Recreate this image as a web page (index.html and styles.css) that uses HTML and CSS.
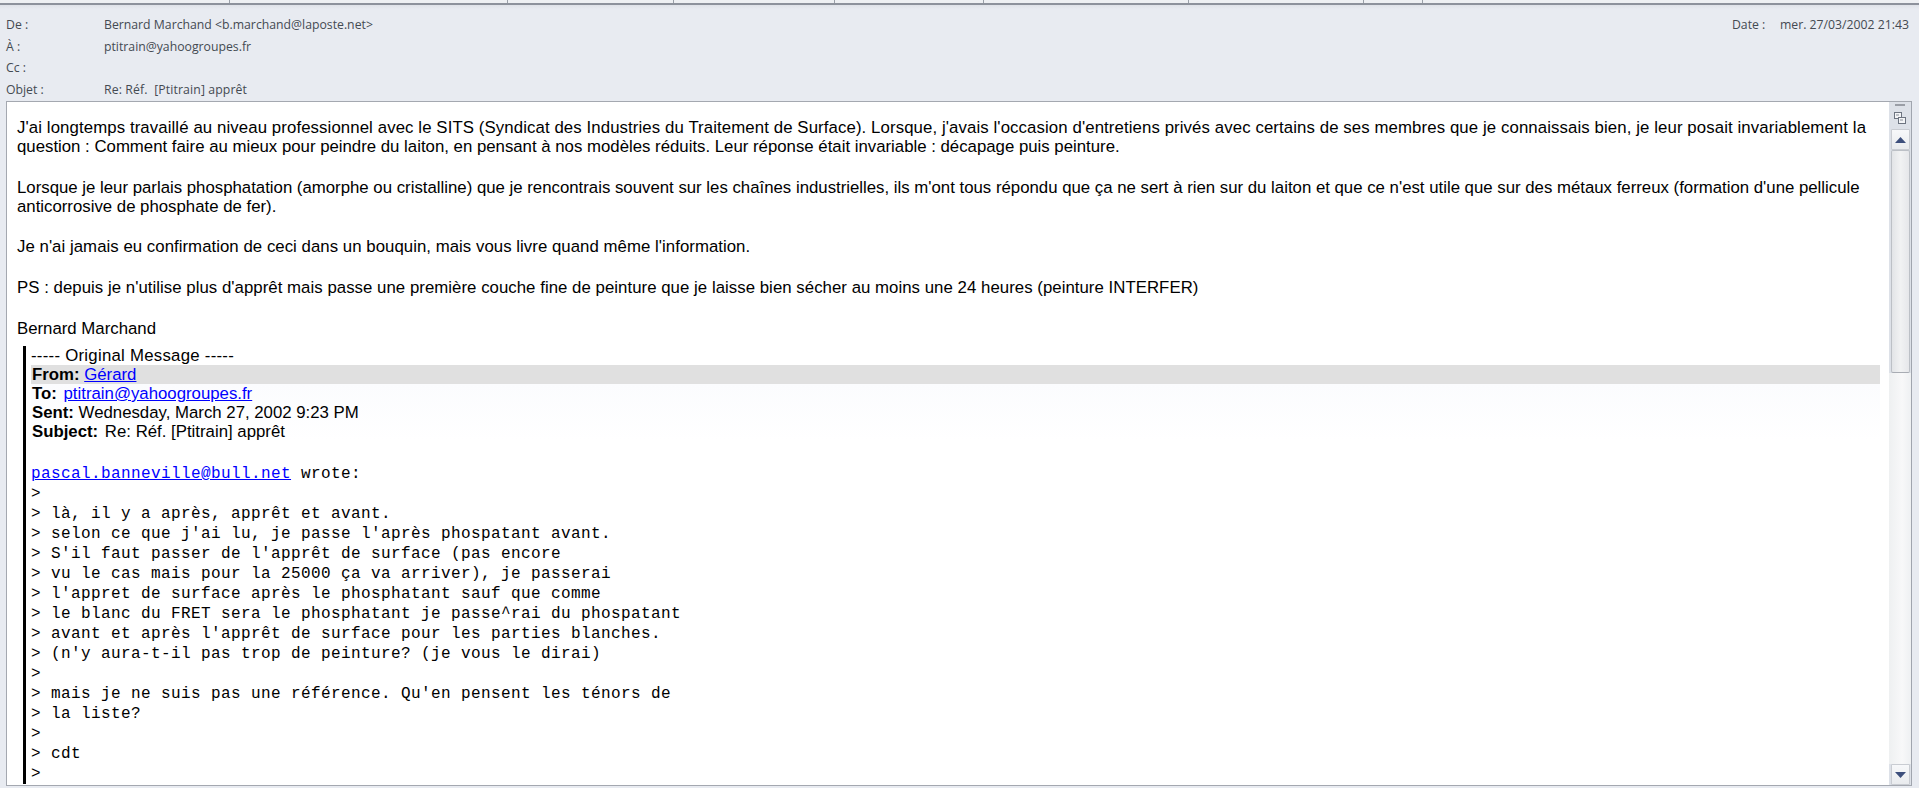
FILE: index.html
```html
<!DOCTYPE html>
<html lang="fr">
<head>
<meta charset="utf-8">
<title>Re: Réf. [Ptitrain] apprêt</title>
<link rel="stylesheet" href="styles.css">
</head>
<body>
<div class="tabs">
  <span class="tab t1"></span><span class="tab t2"></span><span class="tab t3"></span><span class="tab t4"></span><span class="tab t5"></span><span class="tab t6"></span><span class="tab t7"></span><span class="tab t8"></span>
</div>
<header class="head">
  <div class="fields">
    <div class="row"><span class="label">De :</span><span>Bernard Marchand &lt;b.marchand@laposte.net&gt;</span></div>
    <div class="row"><span class="label">À :</span><span>ptitrain@yahoogroupes.fr</span></div>
    <div class="row"><span class="label">Cc :</span><span></span></div>
    <div class="row"><span class="label">Objet :</span><span class="subject">Re: Réf.&nbsp; [Ptitrain] apprêt</span></div>
  </div>
  <div class="date"><span class="date-label">Date :</span><span>mer. 27/03/2002 21:43</span></div>
</header>
<main class="pane">
  <div class="message">
    <p class="para"><span class="wide">J'ai longtemps travaillé au niveau professionnel avec le SITS (Syndicat des Industries du Traitement de Surface). Lorsque, j'avais l'occasion d'entretiens privés avec certains de ses membres que je connaissais bien, je leur posait invariablement la</span><br>question : Comment faire au mieux pour peindre du laiton, en pensant à nos modèles réduits. Leur réponse était invariable : décapage puis peinture.</p>
    <p class="para">Lorsque je leur parlais phosphatation (amorphe ou cristalline) que je rencontrais souvent sur les chaînes industrielles, ils m'ont tous répondu que ça ne sert à rien sur du laiton et que ce n'est utile que sur des métaux ferreux (formation d'une pellicule<br>anticorrosive de phosphate de fer).</p>
    <p class="para tune">Je n'ai jamais eu confirmation de ceci dans un bouquin, mais vous livre quand même l'information.</p>
    <p class="para tune sign-gap">PS : depuis je n'utilise plus d'apprêt mais passe une première couche fine de peinture que je laisse bien sécher au moins une 24 heures (peinture INTERFER)</p>
    <p class="para">Bernard Marchand</p>
    <blockquote class="quote">
      <div class="orig">----- Original Message -----</div>
      <div class="from"><b>From:</b> <a href="#">Gérard</a></div>
      <div class="meta">
        <div><b class="nudge">To:</b> <a href="#">ptitrain@yahoogroupes.fr</a></div>
        <div><b>Sent:</b> Wednesday, March 27, 2002 9:23 PM</div>
        <div><b class="nudge">Subject:</b> Re: Réf. [Ptitrain] apprêt</div>
      </div>
      <pre class="mono"><a href="#">pascal.banneville@bull.net</a> wrote:
&gt;
&gt; là, il y a après, apprêt et avant.
&gt; selon ce que j'ai lu, je passe l'après phospatant avant.
&gt; S'il faut passer de l'apprêt de surface (pas encore
&gt; vu le cas mais pour la 25000 ça va arriver), je passerai
&gt; l'appret de surface après le phosphatant sauf que comme
&gt; le blanc du FRET sera le phosphatant je passe^rai du phospatant
&gt; avant et après l'apprêt de surface pour les parties blanches.
&gt; (n'y aura-t-il pas trop de peinture? (je vous le dirai)
&gt;
&gt; mais je ne suis pas une référence. Qu'en pensent les ténors de
&gt; la liste?
&gt;
&gt; cdt
&gt;</pre>
    </blockquote>
  </div>
  <aside class="scroll">
    <div class="splitter"></div>
    <svg class="pop" width="12" height="12" viewBox="0 0 12 12"><rect x="0.5" y="0.5" width="7" height="6" fill="#f4f5f7" stroke="#6d7480"/><rect x="4.5" y="5.5" width="7" height="6" fill="#f4f5f7" stroke="#6d7480"/><path d="M2 3h3M6 8h3" stroke="#8a909a"/></svg>
    <div class="btn"><svg width="11" height="6" viewBox="0 0 11 6"><path d="M5.5 0L11 6H0z" fill="#3d4f7c"/></svg></div>
    <div class="thumb"></div>
    <div class="track"></div>
    <div class="btn"><svg width="11" height="6" viewBox="0 0 11 6"><path d="M0 0H11L5.5 6z" fill="#3d4f7c"/></svg></div>
  </aside>
</main>
</body>
</html>
```
FILE: styles.css
```css
* { box-sizing: border-box; }
html, body { margin: 0; height: 100%; overflow: hidden; }
body {
  background: #e8ebf1;
  font-family: "Open Sans", "Noto Sans", sans-serif;
  color: #444a52;
  display: flex;
  flex-direction: column;
}
.tabs {
  height: 5px;
  display: flex;
  background: #eef0f3;
  border-bottom: 2px solid #8d929c;
  flex: none;
}
.tab { height: 3px; border-right: 1px solid #9aa0a8; }
.t1 { width: 230px; }
.t2 { width: 278px; }
.t3 { width: 166px; }
.t4 { width: 161px; }
.t5 { width: 149px; }
.t6 { width: 205px; }
.t7 { width: 175px; }
.t8 { width: 59px; }
.head {
  flex: none;
  height: 96px;
  padding: 9px 10px 0 6px;
  display: flex;
  justify-content: space-between;
  font-size: 12.25px;
  background: linear-gradient(#dfe2e8, #e8ebf1 4px);
}
.row { height: 21.5px; line-height: 21px; display: flex; }
.label { width: 98px; }
.subject { letter-spacing: 0.12px; }
.date { line-height: 21px; display: flex; }
.date-label { width: 48px; }
.pane {
  flex: none;
  height: 685px;
  margin: 0 7px 0 6px;
  border: 1px solid #a4a8b0;
  border-right-color: #a0a5ae;
  display: flex;
  background: #fff;
  overflow: hidden;
}
.message {
  flex: 1;
  min-width: 0;
  padding: 16px 9px 0 10px;
  font-family: "Liberation Sans", Arial, sans-serif;
  font-size: 16.8px;
  line-height: 19px;
  color: #000;
  overflow: hidden;
}
.para { margin: 0 0 21.5px; }
.para:last-of-type { margin-bottom: 8px; }
.sign-gap { margin-bottom: 22.5px; }
.wide { letter-spacing: 0.1px; }
.tune { letter-spacing: 0.04px; }
.quote {
  margin: 0 0 0 6px;
  padding: 0 0 0 5px;
  border-left: 3px solid #000;
}
.orig { letter-spacing: 0.26px; }
.from { background: #e0e0e0; padding-left: 1px; }
.nudge { margin-right: 2px; }
.meta {
  padding-left: 1px;
  background: linear-gradient(#fbfcfe, #fff);
}
.quote a { color: #0000ff; text-decoration: underline; }
.mono {
  margin: 23px 0 0;
  font-family: "Liberation Mono", "Courier New", monospace;
  font-size: 16px;
  letter-spacing: 0.4px;
  line-height: 20px;
}
.scroll {
  flex: none;
  width: 22px;
  background: #dde1e8;
  display: flex;
  flex-direction: column;
  align-items: center;
}
.splitter {
  flex: none;
  width: 10px;
  height: 2px;
  margin-top: 2px;
  background: #9a9ea6;
}
.pop { flex: none; margin-top: 6px; margin-bottom: 5px; }
.btn {
  flex: none;
  width: 19px;
  height: 21px;
  background: linear-gradient(#f7f8fa, #e9ebee);
  border: 1px solid #c9ccd2;
  border-radius: 1px;
  display: flex;
  align-items: center;
  justify-content: center;
}
.thumb {
  flex: none;
  width: 19px;
  height: 223px;
  background: linear-gradient(90deg, #e2e4e7, #f1f2f3 50%, #e6e7ea);
  border: 1px solid #bcc0c6;
  border-bottom-color: #a8acb3;
  border-radius: 2px;
}
.track {
  flex: 1;
  width: 100%;
  background: linear-gradient(90deg, #eef0f1, #f8f8f9 60%, #eef0f2);
}
```
